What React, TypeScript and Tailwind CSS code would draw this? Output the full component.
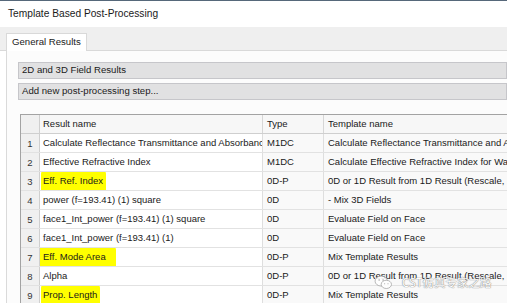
import React from "react";

type Row = {
  n: number;
  name: string;
  type: string;
  template: string;
  mark?: "sm" | "lg";
};

const rows: Row[] = [
  { n: 1, name: "Calculate Reflectance Transmittance and Absorbance", type: "M1DC", template: "Calculate Reflectance Transmittance and Absorbance" },
  { n: 2, name: "Effective Refractive Index", type: "M1DC", template: "Calculate Effective Refractive Index for Waveguide" },
  { n: 3, name: "Eff. Ref. Index", type: "0D-P", template: "0D or 1D Result from 1D Result (Rescale, ...)", mark: "sm" },
  { n: 4, name: "power (f=193.41) (1) square", type: "0D", template: "- Mix 3D Fields" },
  { n: 5, name: "face1_Int_power (f=193.41) (1) square", type: "0D", template: "Evaluate Field on Face" },
  { n: 6, name: "face1_Int_power (f=193.41) (1)", type: "0D", template: "Evaluate Field on Face" },
  { n: 7, name: "Eff. Mode Area", type: "0D-P", template: "Mix Template Results", mark: "lg" },
  { n: 8, name: "Alpha", type: "0D-P", template: "0D or 1D Result from 1D Result (Rescale, ...)" },
  { n: 9, name: "Prop. Length", type: "0D-P", template: "Mix Template Results", mark: "sm" },
];

function WeChatMark() {
  return (
    <svg width="19" height="15" viewBox="0 0 20 16" fill="none">
      <ellipse cx="7.5" cy="6.5" rx="6.5" ry="5.3" fill="#ffffff" stroke="#9a9a9a" strokeWidth="0.8" />
      <ellipse cx="13" cy="10" rx="5.5" ry="4.4" fill="#ffffff" stroke="#9a9a9a" strokeWidth="0.8" />
      <circle cx="5.3" cy="5.3" r="0.8" fill="#9a9a9a" />
      <circle cx="9.5" cy="5.3" r="0.8" fill="#9a9a9a" />
      <circle cx="11.2" cy="9.3" r="0.6" fill="#9a9a9a" />
      <circle cx="14.8" cy="9.3" r="0.6" fill="#9a9a9a" />
    </svg>
  );
}

export default function App() {
  return (
    <div
      className="relative w-[507px] h-[303px] overflow-hidden bg-white text-[#1a1a1a] border-t border-[#56687a]"
      style={{ fontFamily: '"Liberation Sans", Arial, sans-serif' }}
    >
      {/* title */}
      <div className="h-[26px] pl-[8px] flex items-center text-[10.2px]">Template Based Post-Processing</div>

      {/* tab strip */}
      <div className="h-[24px] bg-[#efefef] flex items-end pl-[6px] border-b border-[#d9d9d9]">
        <div className="h-[18px] w-[81px] -mb-px bg-white border border-b-0 border-[#d9d9d9] flex items-center pl-[5px] text-[9.6px]">
          General Results
        </div>
      </div>

      {/* panel */}
      <div className="ml-[6px] border-l border-[#dadada] bg-[#fcfcfc] pt-[11px] pl-[11px] h-full">
        <div className="flex flex-col gap-[4px]">
          <div className="h-[17px] bg-[#e1e1e2] border border-[#c6c6ca] flex items-center pl-[3px] text-[9.6px]">
            2D and 3D Field Results
          </div>
          <div className="h-[17px] bg-[#e1e1e2] border border-[#c6c6ca] flex items-center pl-[3px] text-[9.6px]">
            Add new post-processing step...
          </div>
        </div>

        {/* table */}
        <div className="mt-[14px] ml-[2px] w-[520px] border-t border-l border-[#a3a3a3] bg-white text-[9.5px]">
          <div className="grid grid-cols-[19px_223px_61px_1fr] h-[19px] bg-[#f7f7f7] border-b border-[#cfcfcf]">
            <div className="bg-[#f0f0f0] border-r border-[#cfcfcf]" />
            <div className="flex items-center pl-[3px] border-r border-[#d6d6d6]">Result name</div>
            <div className="flex items-center pl-[4px] border-r border-[#d6d6d6]">Type</div>
            <div className="flex items-center pl-[4px]">Template name</div>
          </div>
          {rows.map((r) => (
            <div key={r.n} className="grid grid-cols-[19px_223px_61px_1fr] h-[19px] border-b border-[#e2e2e2]">
              <div className="bg-[#f0f0f0] border-r border-[#cfcfcf] flex items-center justify-center pt-[2px] text-[#333]">
                {r.n}
              </div>
              <div className="flex items-center pl-[3px] border-r border-[#dedede] whitespace-nowrap overflow-hidden bg-white">
                {r.mark ? (
                  <span
                    className={
                      r.mark === "lg"
                        ? "-ml-[5px] pl-[5px] pr-[10px] h-[21px] flex items-center bg-[#ffff00] rounded-[3px]"
                        : "-ml-[2px] pl-[2px] pr-[3px] h-[21px] flex items-center bg-[#ffff00] rounded-[3px]"
                    }
                  >
                    {r.name}
                  </span>
                ) : (
                  r.name
                )}
              </div>
              <div className="flex items-center pl-[4px] border-r border-[#dedede] bg-[#f9f9f9]">{r.type}</div>
              <div className="flex items-center pl-[4px] whitespace-nowrap overflow-hidden bg-[#f9f9f9]">{r.template}</div>
            </div>
          ))}
        </div>
      </div>

      {/* watermark */}
      <div className="absolute left-[374px] top-[274px] flex items-center gap-[9px] opacity-90">
        <WeChatMark />
        <span
          className="text-[11.5px] text-white leading-none"
          style={{
            fontFamily: '"Noto Sans CJK SC", "Liberation Sans", sans-serif',
            textShadow: "0 0 1px #777, 0 0 1px #777",
          }}
        >
          CST仿真专家之路
        </span>
      </div>
    </div>
  );
}
